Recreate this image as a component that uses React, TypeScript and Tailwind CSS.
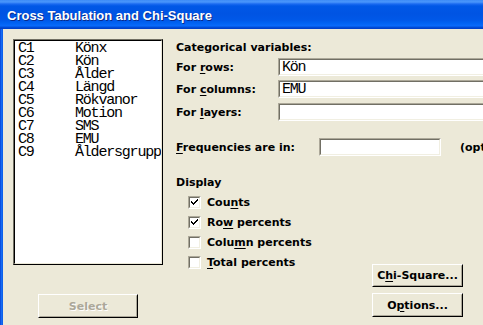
import React from "react";

const U = ({ children }: { children: React.ReactNode }) => (
  <span className="underline underline-offset-[2px] decoration-1">{children}</span>
);

function Input({ value, className }: { value?: string; className: string }) {
  return (
    <div className={`h-[18px] border border-t-[#ACA899] border-l-[#ACA899] border-b-white border-r-white ${className}`}>
      <div className="h-full border border-t-[#716F64] border-l-[#716F64] border-b-[#F1EFE2] border-r-[#F1EFE2] bg-white pl-[2px] font-['Liberation_Mono',monospace] text-[15px] tracking-[-1.2px] leading-[15px] text-black font-normal">
        {value}
      </div>
    </div>
  );
}

function Checkbox({ checked, children }: { checked: boolean; children: React.ReactNode }) {
  return (
    <div className="flex items-center h-[20px]">
      <div className="w-[13px] h-[13px] border border-t-[#ACA899] border-l-[#ACA899] border-b-white border-r-white">
        <div className="w-full h-full border border-t-[#716F64] border-l-[#716F64] border-b-[#F1EFE2] border-r-[#F1EFE2] bg-white">
          {checked && (
            <svg width="9" height="9" viewBox="0 0 9 9" className="block">
              <path d="M1 3h1v1h1v1h1V4h1V3h1V2h1V1h1v2H7v1H6v1H5v1H4v1H3V6H2V5H1z" fill="#000" />
            </svg>
          )}
        </div>
      </div>
      <span className="ml-[6px]">{children}</span>
    </div>
  );
}

function Button({ children, disabled, className }: { children: React.ReactNode; disabled?: boolean; className: string }) {
  return (
    <div className={`border border-t-white border-l-white border-b-[#000] border-r-[#000] ${className}`}>
      <div className="w-full h-full border border-t-[#ECE9D8] border-l-[#ECE9D8] border-b-[#ACA899] border-r-[#ACA899] flex items-center justify-center">
        <span className={disabled ? "text-[#ACA899] [text-shadow:1px_1px_0_#fff]" : "text-black"}>{children}</span>
      </div>
    </div>
  );
}

const vars: [string, string][] = [
  ["C1", "Könx"],
  ["C2", "Kön"],
  ["C3", "Ålder"],
  ["C4", "Längd"],
  ["C5", "Rökvanor"],
  ["C6", "Motion"],
  ["C7", "SMS"],
  ["C8", "EMU"],
  ["C9", "Åldersgrupp"],
];

export default function App() {
  return (
    <div className="w-[483px] h-[325px] overflow-hidden bg-[#ECE9D8] flex flex-col font-['DejaVu_Sans',sans-serif] font-bold text-[11px] leading-[13px] text-black">
      <div className="h-[29px] shrink-0 bg-[linear-gradient(to_bottom,#3d8cf6_0px,#4a97fb_2px,#1a6af0_4px,#0058e6_6px,#0054e3_14px,#0058e8_20px,#0062f2_23px,#0a6bfb_26px,#0050dc_27px,#003cc4_29px)] pl-[7px] pt-[8px]">
        <span className="font-['Liberation_Sans',sans-serif] font-bold text-[13px] leading-[15px] text-white [text-shadow:1px_1px_0_#0a2a8a]">
          Cross Tabulation and Chi-Square
        </span>
      </div>
      <div className="flex flex-1">
        <div className="w-[3px] shrink-0 bg-[linear-gradient(to_right,#0841d6,#166cf2,#0a5ae8)]" />
        <div className="flex pl-[10px] pt-[10px]">
          <div className="flex flex-col w-[150px] shrink-0">
            <div className="h-[226px] border border-[#000] border-t-[#716F64] border-l-[#716F64]">
              <div className="h-full border border-t-[#000] border-l-[#000] border-b-[#ECE9D8] border-r-[#ECE9D8] bg-white overflow-hidden pl-[3px] pt-[1px] font-['Liberation_Mono',monospace] font-normal text-[15px] tracking-[-1.2px] leading-[13px]">
                {vars.map(([c, n]) => (
                  <div key={c} className="flex h-[13px] whitespace-nowrap">
                    <span className="w-[57px] shrink-0">{c}</span>
                    <span>{n}</span>
                  </div>
                ))}
              </div>
            </div>
            <Button disabled className="mt-[29px] ml-[25px] w-[100px] h-[24px]">Select</Button>
          </div>
          <div className="flex flex-col ml-[13px] w-[400px] shrink-0">
            <div className="mt-[2px]">Categorical variables:</div>
            <div className="flex items-center h-[18px] mt-[4px]">
              <span className="w-[102px]">For <U>r</U>ows:</span>
              <Input value="Kön" className="w-[220px]" />
            </div>
            <div className="flex items-center h-[18px] mt-[4px]">
              <span className="w-[102px]">For <U>c</U>olumns:</span>
              <Input value="EMU" className="w-[220px]" />
            </div>
            <div className="flex items-center h-[18px] mt-[5px]">
              <span className="w-[102px]">For <U>l</U>ayers:</span>
              <Input className="w-[220px]" />
            </div>
            <div className="flex items-center h-[18px] mt-[17px]">
              <span className="w-[143px]"><U>F</U>requencies are in:</span>
              <Input className="w-[122px]" />
              <span className="ml-[19px] whitespace-nowrap">(optional)</span>
            </div>
            <div className="mt-[20px]">Display</div>
            <div className="flex">
              <div className="flex flex-col w-[196px] pl-[12px] mt-[3px]">
                <Checkbox checked>Cou<U>n</U>ts</Checkbox>
                <Checkbox checked>Ro<U>w</U> percents</Checkbox>
                <Checkbox checked={false}>Colu<U>m</U>n percents</Checkbox>
                <Checkbox checked={false}><U>T</U>otal percents</Checkbox>
              </div>
              <div className="flex flex-col mt-[75px]">
                <Button className="w-[91px] h-[23px]">C<U>h</U>i-Square...</Button>
                <Button className="w-[91px] h-[24px] mt-[6px]">O<U>p</U>tions...</Button>
              </div>
            </div>
          </div>
        </div>
      </div>
    </div>
  );
}
